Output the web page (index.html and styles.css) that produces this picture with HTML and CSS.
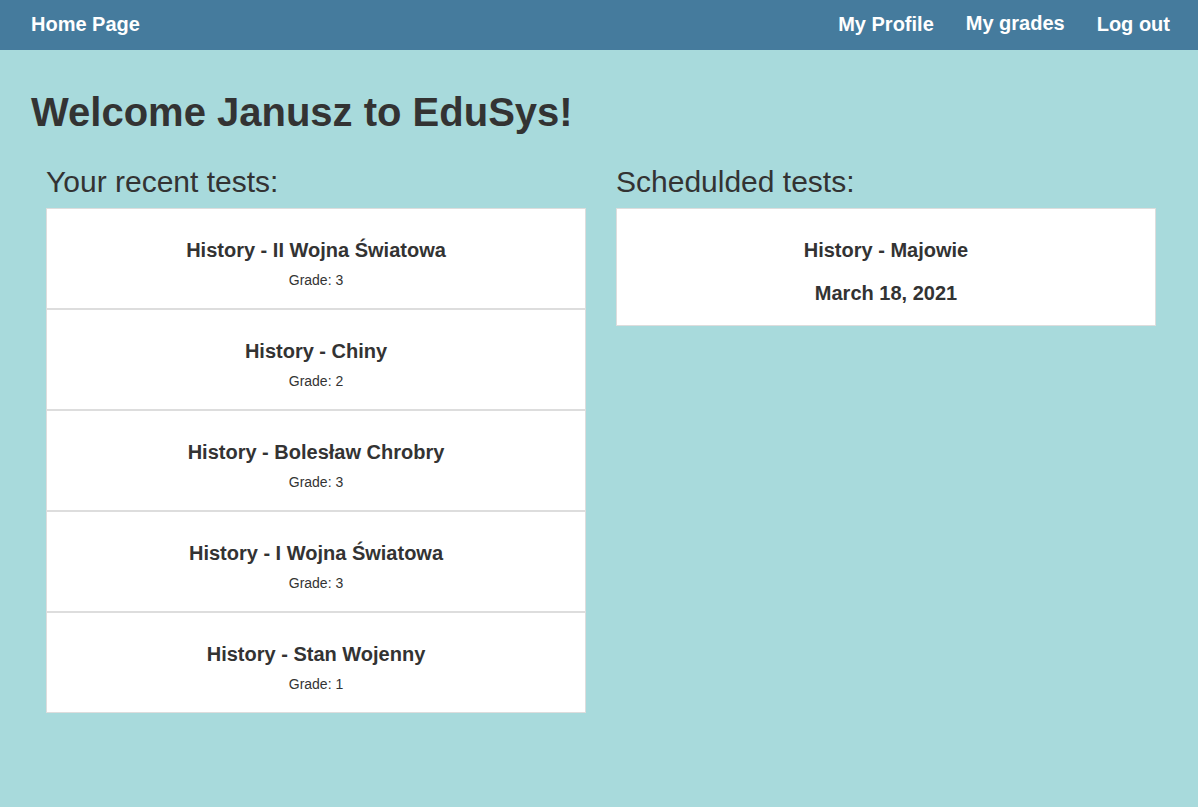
FILE: index.html
```html
<!DOCTYPE html>
<html lang="en">
<head>
<meta charset="utf-8">
<title>EduSys</title>
<link rel="stylesheet" href="styles.css">
</head>
<body>
<nav class="navbar">
  <a class="nav-link" href="#">Home Page</a>
  <div class="nav-right">
    <a class="nav-link" href="#">My Profile</a>
    <a class="nav-link nav-link-up" href="#">My grades</a>
    <a class="nav-link" href="#">Log out</a>
  </div>
</nav>
<main class="main">
  <h1 class="welcome">Welcome Janusz to EduSys!</h1>
  <div class="columns">
    <section class="column">
      <h2 class="column-title">Your recent tests:</h2>
      <div class="card-list">
        <div class="test-item">
          <h3 class="test-name">History - II Wojna Światowa</h3>
          <p class="test-grade">Grade: 3</p>
        </div>
        <div class="test-item">
          <h3 class="test-name">History - Chiny</h3>
          <p class="test-grade">Grade: 2</p>
        </div>
        <div class="test-item">
          <h3 class="test-name">History - Bolesław Chrobry</h3>
          <p class="test-grade">Grade: 3</p>
        </div>
        <div class="test-item">
          <h3 class="test-name">History - I Wojna Światowa</h3>
          <p class="test-grade">Grade: 3</p>
        </div>
        <div class="test-item">
          <h3 class="test-name">History - Stan Wojenny</h3>
          <p class="test-grade">Grade: 1</p>
        </div>
      </div>
    </section>
    <section class="column">
      <h2 class="column-title">Schedulded tests:</h2>
      <div class="card-list">
        <div class="test-item scheduled">
          <h3 class="test-name">History - Majowie</h3>
          <p class="test-date">March 18, 2021</p>
        </div>
      </div>
    </section>
  </div>
</main>
</body>
</html>
```

FILE: styles.css
```css
* {
  box-sizing: border-box;
}

html, body {
  margin: 0;
  padding: 0;
}

body {
  background: #a8dadc;
  color: #333333;
  font-family: "Liberation Sans", Arial, sans-serif;
  min-height: 807px;
}

.navbar {
  height: 50px;
  background: #457b9d;
  display: flex;
  align-items: center;
  justify-content: space-between;
  padding: 0 28px 2px 31px;
}

.nav-right {
  display: flex;
  gap: 32px;
  align-items: center;
}

.nav-link {
  color: #ffffff;
  text-decoration: none;
  font-weight: bold;
  font-size: 20px;
}

.nav-link-up {
  position: relative;
  top: -1px;
}

.main {
  padding: 0 27px 0 31px;
}

.welcome {
  margin: 40px 0 0;
  font-size: 40px;
  font-weight: bold;
  color: #333333;
}

.columns {
  display: grid;
  grid-template-columns: 570px 570px;
  margin-top: 30px;
}

.column {
  padding: 0 15px;
}

.column-title {
  margin: 0 0 9px;
  font-size: 30px;
  font-weight: normal;
  color: #333333;
}

.card-list {
  display: flex;
  flex-direction: column;
}

.test-item {
  height: 101px;
  padding: 30px 0 20px;
  text-align: center;
  background: #ffffff;
  border: 1px solid #dddddd;
}

.test-item.scheduled {
  height: 118px;
  padding-bottom: 20px;
}

.test-name {
  margin: 0 0 10px;
  font-size: 20px;
  font-weight: bold;
}

.test-grade {
  margin: 0;
  font-size: 14px;
}

.scheduled .test-name {
  margin-bottom: 20px;
}

.test-date {
  margin: 0;
  font-size: 20px;
  font-weight: bold;
}
```
